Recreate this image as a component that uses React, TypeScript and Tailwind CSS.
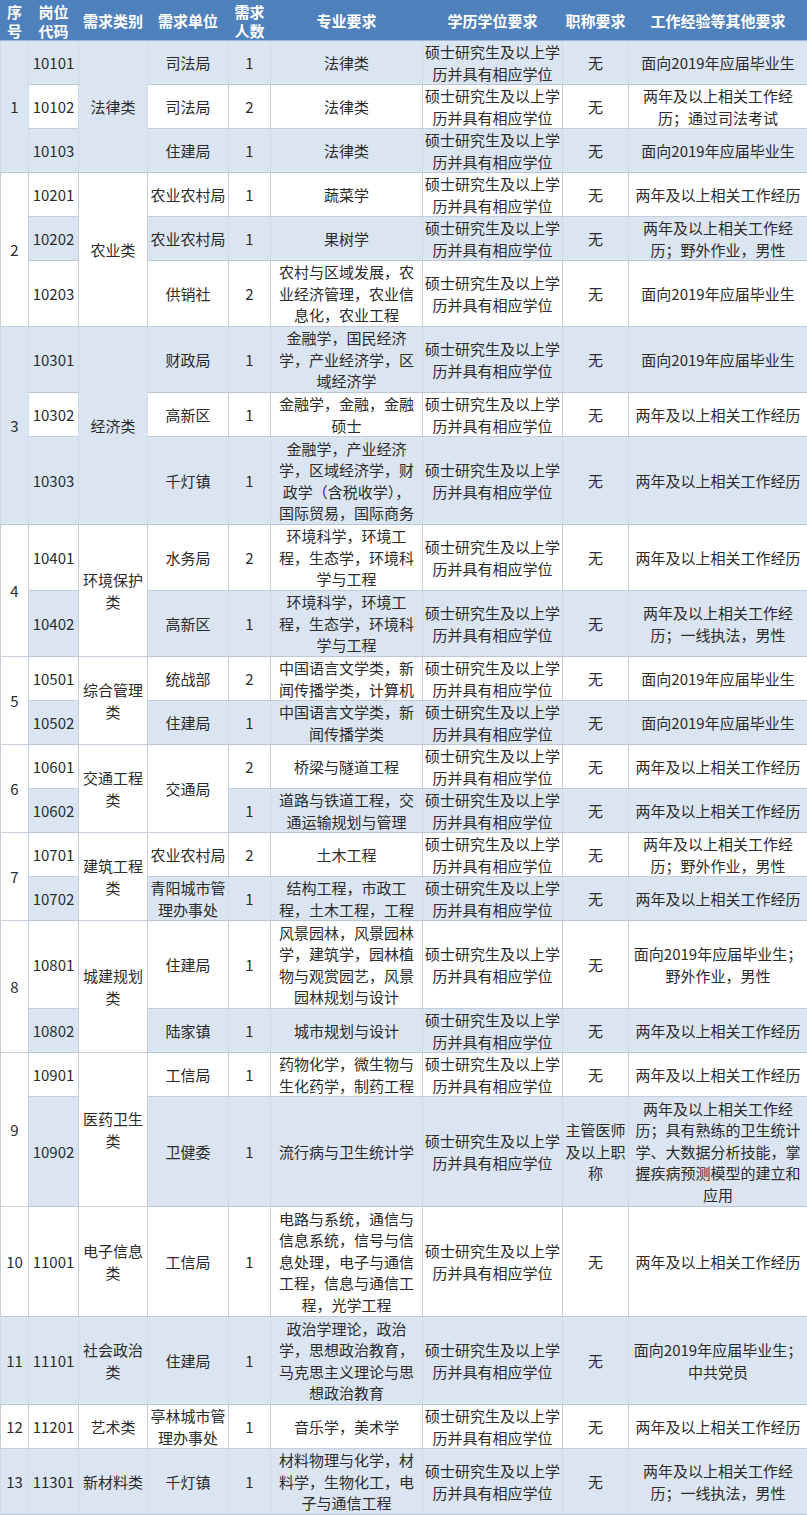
import React from "react";

type Row = {
  code: string;
  unit?: string[];
  unitSpan?: number;
  count: string;
  major: string[];
  title?: string[];
  exp: string[];
  h: number;
};

type Group = { no: string; cat: string[]; rows: Row[] };

const EDU = ["硕士研究生及以上学", "历并具有相应学位"];
const EXP2 = ["两年及以上相关工作经历"];
const NEW = ["面向2019年应届毕业生"];

const groups: Group[] = [
  {
    no: "1",
    cat: ["法律类"],
    rows: [
      { code: "10101", unit: ["司法局"], count: "1", major: ["法律类"], exp: NEW, h: 44 },
      { code: "10102", unit: ["司法局"], count: "2", major: ["法律类"], exp: ["两年及以上相关工作经", "历；通过司法考试"], h: 44 },
      { code: "10103", unit: ["住建局"], count: "1", major: ["法律类"], exp: NEW, h: 44 },
    ],
  },
  {
    no: "2",
    cat: ["农业类"],
    rows: [
      { code: "10201", unit: ["农业农村局"], count: "1", major: ["蔬菜学"], exp: EXP2, h: 44 },
      { code: "10202", unit: ["农业农村局"], count: "1", major: ["果树学"], exp: ["两年及以上相关工作经", "历；野外作业，男性"], h: 44 },
      { code: "10203", unit: ["供销社"], count: "2", major: ["农村与区域发展，农", "业经济管理，农业信", "息化，农业工程"], exp: NEW, h: 66 },
    ],
  },
  {
    no: "3",
    cat: ["经济类"],
    rows: [
      { code: "10301", unit: ["财政局"], count: "1", major: ["金融学，国民经济", "学，产业经济学，区", "域经济学"], exp: NEW, h: 66 },
      { code: "10302", unit: ["高新区"], count: "1", major: ["金融学，金融，金融", "硕士"], exp: EXP2, h: 44 },
      { code: "10303", unit: ["千灯镇"], count: "1", major: ["金融学，产业经济", "学，区域经济学，财", "政学（含税收学），", "国际贸易，国际商务"], exp: EXP2, h: 88 },
    ],
  },
  {
    no: "4",
    cat: ["环境保护", "类"],
    rows: [
      { code: "10401", unit: ["水务局"], count: "2", major: ["环境科学，环境工", "程，生态学，环境科", "学与工程"], exp: EXP2, h: 66 },
      { code: "10402", unit: ["高新区"], count: "1", major: ["环境科学，环境工", "程，生态学，环境科", "学与工程"], exp: ["两年及以上相关工作经", "历；一线执法，男性"], h: 66 },
    ],
  },
  {
    no: "5",
    cat: ["综合管理", "类"],
    rows: [
      { code: "10501", unit: ["统战部"], count: "2", major: ["中国语言文学类，新", "闻传播学类，计算机"], exp: NEW, h: 44 },
      { code: "10502", unit: ["住建局"], count: "1", major: ["中国语言文学类，新", "闻传播学类"], exp: NEW, h: 44 },
    ],
  },
  {
    no: "6",
    cat: ["交通工程", "类"],
    rows: [
      { code: "10601", unit: ["交通局"], unitSpan: 2, count: "2", major: ["桥梁与隧道工程"], exp: EXP2, h: 44 },
      { code: "10602", count: "1", major: ["道路与铁道工程，交", "通运输规划与管理"], exp: EXP2, h: 44 },
    ],
  },
  {
    no: "7",
    cat: ["建筑工程", "类"],
    rows: [
      { code: "10701", unit: ["农业农村局"], count: "2", major: ["土木工程"], exp: ["两年及以上相关工作经", "历；野外作业，男性"], h: 44 },
      { code: "10702", unit: ["青阳城市管", "理办事处"], count: "1", major: ["结构工程，市政工", "程，土木工程，工程"], exp: EXP2, h: 44 },
    ],
  },
  {
    no: "8",
    cat: ["城建规划", "类"],
    rows: [
      { code: "10801", unit: ["住建局"], count: "1", major: ["风景园林，风景园林", "学，建筑学，园林植", "物与观赏园艺，风景", "园林规划与设计"], exp: ["面向2019年应届毕业生；", "野外作业，男性"], h: 88 },
      { code: "10802", unit: ["陆家镇"], count: "1", major: ["城市规划与设计"], exp: EXP2, h: 44 },
    ],
  },
  {
    no: "9",
    cat: ["医药卫生", "类"],
    rows: [
      { code: "10901", unit: ["工信局"], count: "1", major: ["药物化学，微生物与", "生化药学，制药工程"], exp: EXP2, h: 44 },
      {
        code: "10902",
        unit: ["卫健委"],
        count: "1",
        major: ["流行病与卫生统计学"],
        title: ["主管医师", "及以上职", "称"],
        exp: ["两年及以上相关工作经", "历；具有熟练的卫生统计", "学、大数据分析技能，掌", "握疾病预测模型的建立和", "应用"],
        h: 110,
      },
    ],
  },
  {
    no: "10",
    cat: ["电子信息", "类"],
    rows: [
      { code: "11001", unit: ["工信局"], count: "1", major: ["电路与系统，通信与", "信息系统，信号与信", "息处理，电子与通信", "工程，信息与通信工", "程，光学工程"], exp: EXP2, h: 110 },
    ],
  },
  {
    no: "11",
    cat: ["社会政治", "类"],
    rows: [
      { code: "11101", unit: ["住建局"], count: "1", major: ["政治学理论，政治", "学，思想政治教育，", "马克思主义理论与思", "想政治教育"], exp: ["面向2019年应届毕业生；", "中共党员"], h: 88 },
    ],
  },
  {
    no: "12",
    cat: ["艺术类"],
    rows: [
      { code: "11201", unit: ["亭林城市管", "理办事处"], count: "1", major: ["音乐学，美术学"], exp: EXP2, h: 44 },
    ],
  },
  {
    no: "13",
    cat: ["新材料类"],
    rows: [
      { code: "11301", unit: ["千灯镇"], count: "1", major: ["材料物理与化学，材", "料学，生物化工，电", "子与通信工程"], exp: ["两年及以上相关工作经", "历；一线执法，男性"], h: 66 },
    ],
  },
];

function Lines({ lines }: { lines: string[] }) {
  return (
    <>
      {lines.map((l, i) => (
        <div key={i} className="whitespace-nowrap">
          {l}
        </div>
      ))}
    </>
  );
}

function Cell({
  lines,
  blue,
  rowSpan,
}: {
  lines: string[];
  blue: boolean;
  rowSpan?: number;
}) {
  return (
    <td
      rowSpan={rowSpan}
      className={
        blue
          ? "bg-[#dbe5f1] border border-y-[#b9c7d8] border-x-[#cfdae8] px-0 py-0 text-center align-middle"
          : "bg-white border border-[#c5ceda] px-0 py-0 text-center align-middle"
      }
    >
      <Lines lines={lines} />
    </td>
  );
}

export default function App() {
  let idx = 0;
  const body: React.ReactNode[] = [];
  groups.forEach((g) => {
    const span = g.rows.length;
    const groupBlue = idx % 2 === 0;
    let unitBlue = false;
    g.rows.forEach((r, ri) => {
      const blue = idx % 2 === 0;
      idx++;
      if (r.unit) unitBlue = blue;
      body.push(
        <tr key={r.code} style={{ height: r.h }}>
          {ri === 0 && <Cell lines={[g.no]} blue={groupBlue} rowSpan={span} />}
          <Cell lines={[r.code]} blue={blue} />
          {ri === 0 && <Cell lines={g.cat} blue={groupBlue} rowSpan={span} />}
          {r.unit && <Cell lines={r.unit} blue={unitBlue} rowSpan={r.unitSpan} />}
          <Cell lines={[r.count]} blue={blue} />
          <Cell lines={r.major} blue={blue} />
          <Cell lines={EDU} blue={blue} />
          <Cell lines={r.title ?? ["无"]} blue={blue} />
          <Cell lines={r.exp} blue={blue} />
        </tr>
      );
    });
  });

  const head = [
    ["序", "号"],
    ["岗位", "代码"],
    ["需求类别"],
    ["需求单位"],
    ["需求", "人数"],
    ["专业要求"],
    ["学历学位要求"],
    ["职称要求"],
    ["工作经验等其他要求"],
  ];

  return (
    <div
      className="w-[807px] bg-white text-[#2b2b2b] text-[15px] leading-[21.5px]"
      style={{ fontFamily: '"Microsoft YaHei", "Noto Sans CJK SC", "Noto Sans", sans-serif' }}
    >
      <table className="w-[807px] table-fixed border-collapse">
        <colgroup>
          <col className="w-[28px]" />
          <col className="w-[50px]" />
          <col className="w-[69px]" />
          <col className="w-[81px]" />
          <col className="w-[42px]" />
          <col className="w-[152px]" />
          <col className="w-[140px]" />
          <col className="w-[66px]" />
          <col className="w-[179px]" />
        </colgroup>
        <thead>
          <tr className="h-[40px]">
            {head.map((h, i) => (
              <th
                key={i}
                className="bg-[#4f81bd] border border-[#4f81bd] border-b-[#9db5d6] p-0 text-center align-middle font-bold text-white leading-[19px]"
              >
                <Lines lines={h} />
              </th>
            ))}
          </tr>
        </thead>
        <tbody>{body}</tbody>
      </table>
    </div>
  );
}
